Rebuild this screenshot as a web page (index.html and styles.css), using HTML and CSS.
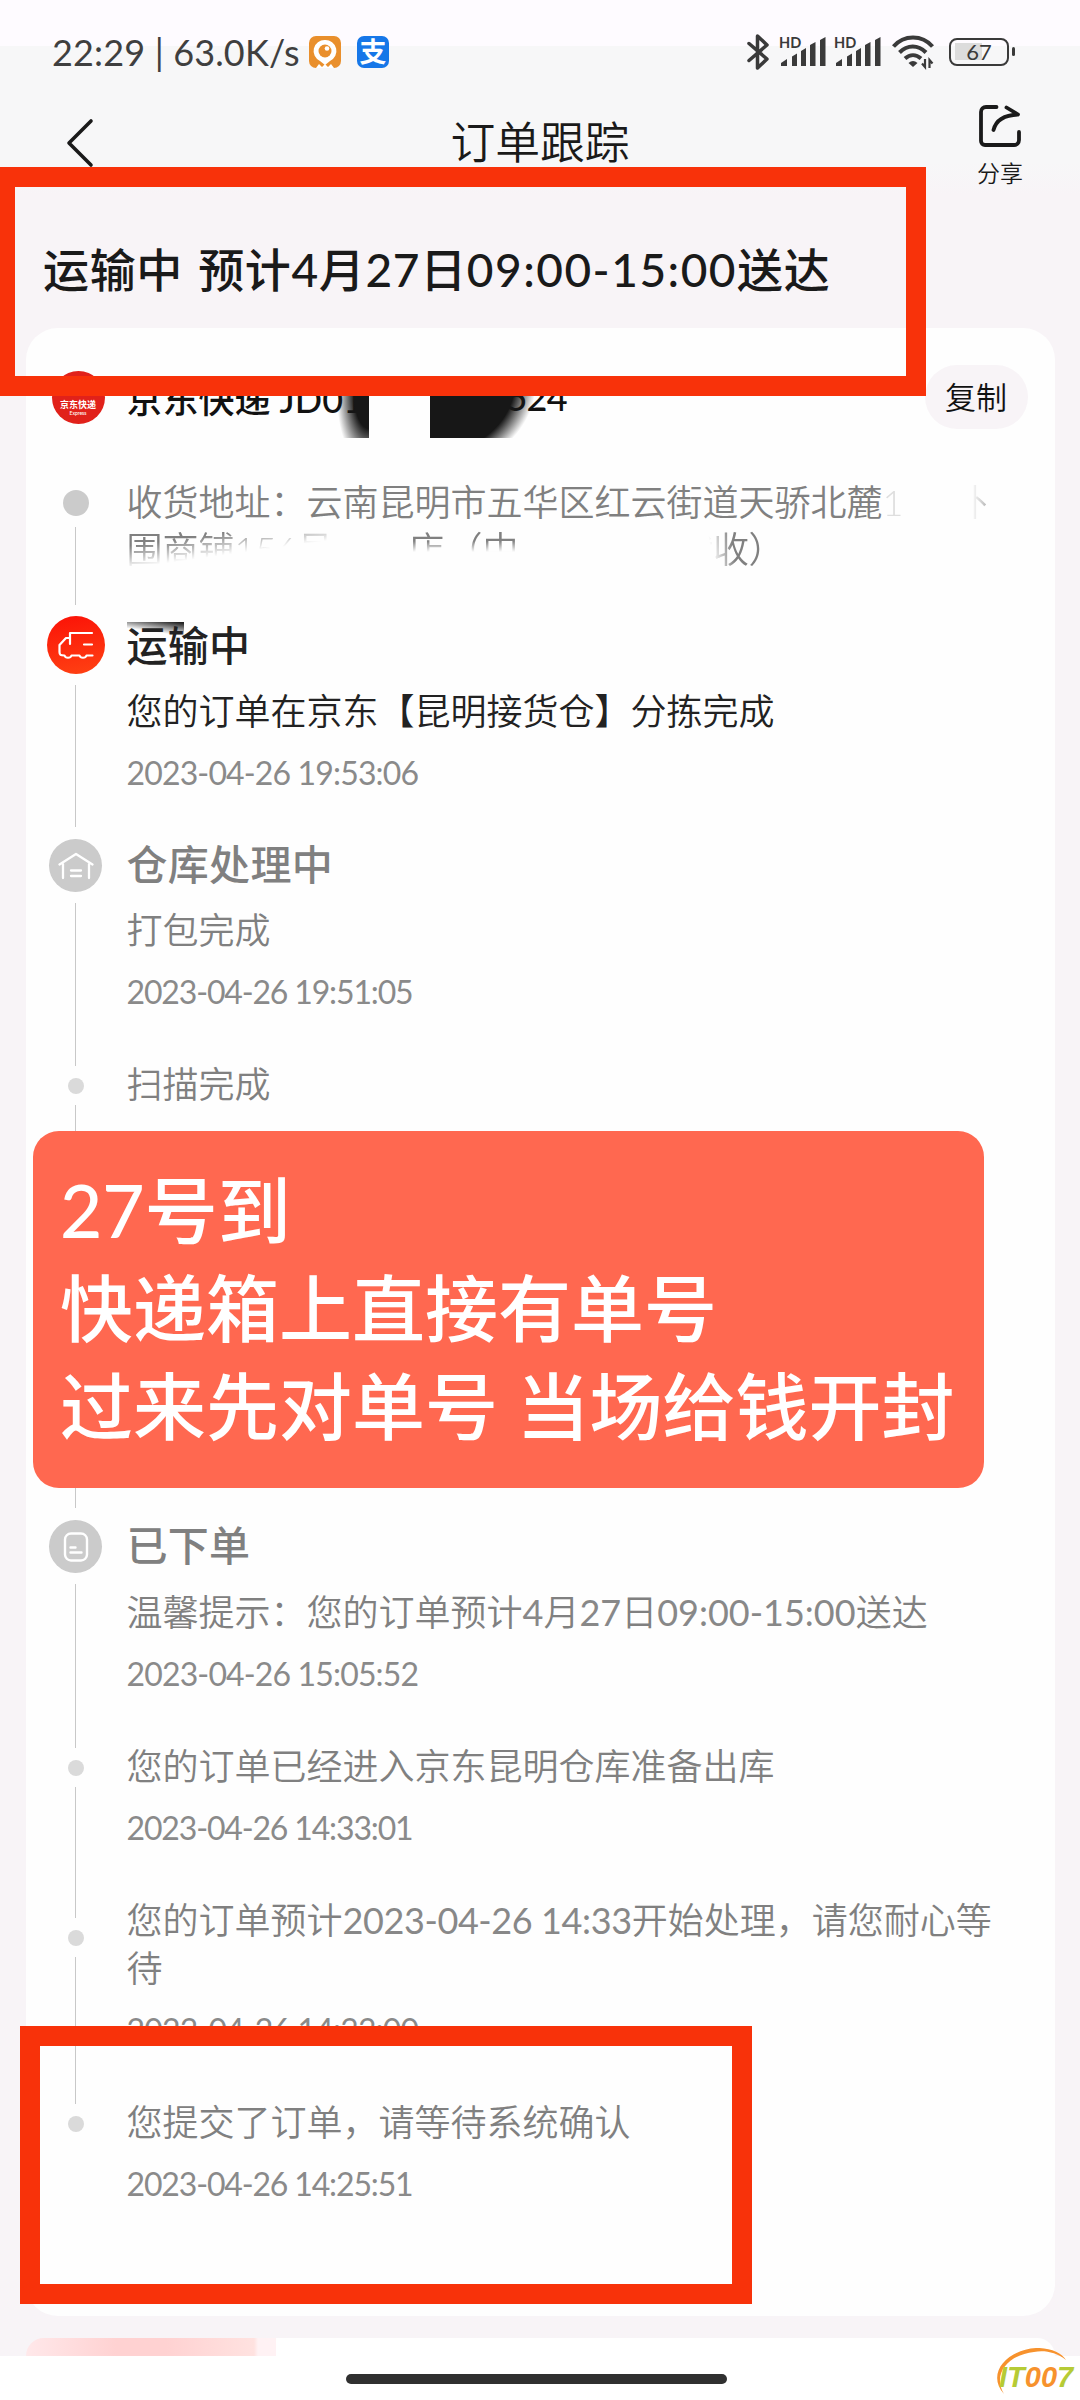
FILE: index.html
```html
<!DOCTYPE html>
<html lang="zh-CN">
<head>
<meta charset="utf-8">
<title>订单跟踪</title>
<link rel="stylesheet" href="styles.css">
</head>
<body>
<div class="screen">
  <header class="top">
    <div class="status">
      <span class="clock">22:29 | 63.0K/s</span>
      <svg class="app-icon" width="32" height="32" viewBox="0 0 32 32"><rect width="32" height="32" rx="7" fill="#e98f2c"/><path d="M7 32l3-4 3 3 3-3 3 3 3-3 3 4z" fill="#fff"/><path d="M16 4a11 11 0 0 1 5 21l-5 4-5-4a11 11 0 0 1 5-21z" fill="#fff"/><circle cx="16" cy="15" r="6.5" fill="#e98f2c"/><circle cx="18" cy="12.500" r="2.300" fill="#fff"/></svg>
      <span class="pay-icon">支</span>
      <div class="signals">
        <svg width="22" height="36" viewBox="0 0 22 36" fill="none" stroke="#3a3a3a" stroke-width="3.500" stroke-linejoin="round" stroke-linecap="round"><path d="M2 9.500L20 25 10.500 34V2L20 11 2 26.500"/></svg>
        <svg class="cell" width="47" height="32" viewBox="0 0 47 32"><text x="0" y="12" class="hd">HD</text><g fill="#3a3a3a"><path d="M2 30v-3l6-4v7zM13 30V20.500l5-3V30zM22 30V15l5-3V30zM31 30V9l5.500-3v24zM41 30V4l5.500-3v29z"/></g></svg>
        <svg class="cell2" width="47" height="32" viewBox="0 0 47 32"><text x="0" y="12" class="hd">HD</text><g fill="#3a3a3a"><path d="M2 30v-3l6-4v7zM13 30V20.500l5-3V30zM22 30V15l5-3V30zM31 30V9l5.500-3v24zM41 30V4l5.500-3v29z"/></g></svg>
        <svg class="wifi" width="42" height="34" viewBox="0 0 42 34" fill="none" stroke="#3a3a3a" stroke-width="4"><path d="M1.500 11.500C12-.500 30-.500 40.500 11.500M7.500 17.500c8-8 18.500-8 26.500 0M13 23.500c5-4.500 11-4.500 16 0"/><path d="M16.500 28q4.500-4 9 0L21 32z" fill="#3a3a3a" stroke="none"/><path d="M33 24v8l-3-3.500M37.500 33v-8l3 3.500" stroke-width="2.200"/></svg>
        <span class="battery">67</span>
      </div>
    </div>
    <nav class="nav">
      <svg class="back" width="28" height="50" viewBox="0 0 28 50" fill="none" stroke="#1a1a1a" stroke-width="3.600" stroke-linecap="round" stroke-linejoin="round"><path d="M25 3L3 25l22 22"/></svg>
      <h1>订单跟踪</h1>
      <div class="share">
        <svg width="44" height="44" viewBox="0 0 44 44" fill="none" stroke="#1a1a1a" stroke-width="3.800" stroke-linecap="round" stroke-linejoin="round"><path d="M18.500 3H8a5 5 0 0 0-5 5v29a4 4 0 0 0 4 4h29a5 5 0 0 0 5-5V28M28.500 3.500L40 10.500M40 10.500C27 11 18 16 15.500 26"/></svg>
        <span>分享</span>
      </div>
    </nav>
  </header>

  <h2 class="eta">运输中 预计4月27日<span>09:00-15:00</span>送达</h2>

  <main class="card">
    <div class="courier">
      <span class="logo"><b>京东快递</b><i>Express</i></span>
      <span class="number">京东快递 JD01</span>
      <span class="tail-number">524</span>
      <button class="copy">复制</button>
      <i class="ink ink-left"></i><i class="ink ink-right"></i>
    </div>

    <ol class="timeline">
      <li class="step address">
        <div class="rail"><span class="pin"></span><span class="line"></span></div>
        <div class="body">
          <p><span>收货地址：云南昆明市五华区红云街道天骄北麓</span><span class="faint">1</span><span class="half">外</span></p>
          <p class="wiped"><span class="w1">围商铺156号</span><span class="w2">店</span><span class="w3">（中</span><span class="w4">代收）</span></p>
        </div>
      </li>
      <li class="step current">
        <div class="rail"><span class="badge truck"><svg width="36" height="28" viewBox="0 0 36 28" fill="none" stroke="#fff" stroke-width="2.200" stroke-linecap="round" stroke-linejoin="round"><path d="M34 2H12v11M12 7H8L1.500 14v7c0 3 1 3.500 5 3.500 1 3 6 3 7 0h8c1 3 6 3 7 0h6M26 13.500h8"/></svg></span><span class="line"></span></div>
        <div class="body"><h3>运输中</h3><p>您的订单在京东【昆明接货仓】分拣完成</p><time>2023-04-26 19:53:06</time><i class="scribble"></i></div>
      </li>
      <li class="step">
        <div class="rail"><span class="badge"><svg width="36" height="28" viewBox="0 0 36 28" fill="none" stroke="#fff" stroke-width="2.300" stroke-linecap="round" stroke-linejoin="round"><path d="M1.500 12.500L18 2l16.500 10.500M5 12v14M31 12v14M13 18.500h10M13 24h10"/></svg></span><span class="line"></span></div>
        <div class="body before-dot"><h3>仓库处理中</h3><p>打包完成</p><time class="tight">2023-04-26 19:51:05</time></div>
      </li>
      <li class="step dot covered">
        <div class="rail"><span class="lead"></span><span class="pin"></span><span class="line"></span></div>
        <div class="body"><p>扫描完成</p></div>
      </li>
      <li class="step placed">
        <div class="rail"><span class="badge"><svg width="26" height="30" viewBox="0 0 26 30" fill="none" stroke="#fff" stroke-width="2.400" stroke-linecap="round"><rect x="2" y="1.500" width="22" height="27" rx="6"/><path d="M7.500 15.500h5M7.500 20.500h11"/></svg></span><span class="line"></span></div>
        <div class="body before-dot"><h3>已下单</h3><p>温馨提示：您的订单预计<span class="num">4</span>月<span class="num">27</span>日<span class="num">09:00-15:00</span>送达</p><time>2023-04-26 15:05:52</time></div>
      </li>
      <li class="step dot">
        <div class="rail"><span class="lead"></span><span class="pin"></span><span class="line"></span></div>
        <div class="body before-dot"><p>您的订单已经进入京东昆明仓库准备出库</p><time class="tight">2023-04-26 14:33:01</time></div>
      </li>
      <li class="step dot tall">
        <div class="rail"><span class="lead"></span><span class="pin"></span><span class="line"></span></div>
        <div class="body before-dot"><p>您的订单预计<span class="num when">2023-04-26 14:33</span>开始处理，请您耐心等<br>待</p><time>2023-04-26 14:33:00</time></div>
      </li>
      <li class="step dot">
        <div class="rail"><span class="lead"></span><span class="pin"></span></div>
        <div class="body"><p>您提交了订单，请等待系统确认</p><time class="tight">2023-04-26 14:25:51</time></div>
      </li>
    </ol>
  </main>

  <section class="next-card"></section>
  <footer class="home"><span></span></footer>

  <div class="frame frame-eta"></div>
  <div class="frame frame-submit"></div>
  <div class="callout">27号到<br>快递箱上直接有单号<br>过来先对单号 当场给钱开封</div>
  <div class="watermark">
    <svg width="80" height="50" viewBox="0 0 80 50"><path d="M10 46C-8 26 12 2 42 0 56-.500 68 5 72 12 62 4 50 2 40 4 14 7-2 26 10 46z" fill="#f7922d"/></svg>
    <span>IT<b>00</b>7</span>
  </div>
</div>
</body>
</html>
```
FILE: styles.css
```css
* { box-sizing: border-box; margin: 0; padding: 0; }
body { background: #fff; }
.screen {
  position: relative; width: 1080px; height: 2400px; overflow: hidden;
  display: flex; flex-direction: column; background: #f8f4f7;
  font-family: Lato, "Noto Sans CJK SC", sans-serif; color: #1a1a1a;
}
.top { height: 195px; background: linear-gradient(#fefbff 0 46px, #f7f7f8 46px 162px, #f8f4f7 195px); }
.status { display: flex; align-items: center; height: 72px; padding: 32px 65px 0 52px; }
.clock { width: 257px; font-size: 36px; letter-spacing: 0.15px; color: #3f3f3f; white-space: nowrap; line-height: 40px; }
.pay-icon {
  width: 32px; height: 32px; margin-left: 16px; border-radius: 7px; background: #1677e8; color: #fff;
  font: bold 27px/29px "Noto Sans CJK SC", sans-serif; text-align: center;
}
.signals { display: flex; align-items: center; margin-left: auto; }
.signals svg { overflow: visible; }
.cell { margin-left: 10px; }
.cell2 { margin-left: 8px; }
.hd { font: bold 14.500px Lato, sans-serif; fill: #3a3a3a; }
.wifi { margin-left: 11px; }
.battery {
  position: relative; width: 60px; height: 28px; margin: 0 6px 0 15px; border: 2.5px solid #3a3a3a; border-radius: 8px;
  font-size: 22px; line-height: 23px; text-align: center; color: #3a3a3a;
  background: linear-gradient(90deg, #dcdcdc 27px, transparent 27px) 4px 3px / 50px 17px no-repeat;
}
.battery::after { content: ""; position: absolute; right: -8px; top: 7px; width: 3px; height: 9px; border-radius: 2px; background: #3a3a3a; }
.nav { display: grid; grid-template-columns: 1fr auto 1fr; align-items: start; padding: 0 57px 0 66px; }
.back { margin-top: 46px; }
h1 { font-size: 44.800px; font-weight: 350; line-height: 60px; margin-top: 40px; padding-right: 9px; }
.share { justify-self: end; display: flex; flex-direction: column; align-items: center; padding-top: 32px; }
.share span { font-size: 23px; line-height: 30px; margin-top: 10px; font-weight: 350; }
.eta { height: 133px; padding: 45px 0 0 43px; font-size: 46px; line-height: 60px; font-weight: 500; white-space: nowrap; letter-spacing: 0.65px; word-spacing: 3px; }
.eta span { letter-spacing: 1.5px; }

.card { width: 1029px; height: 1988px; margin: 0 auto; padding-top: 37px; border-radius: 32px; background: #fefefe; }
.courier { position: relative; display: flex; align-items: center; height: 64px; padding: 0 27px 0 26px; font-size: 36px; font-weight: 500; color: #111; }
.logo {
  display: flex; flex-direction: column; align-items: center; justify-content: flex-end; width: 53px; height: 53px;
  padding-bottom: 7px; border-radius: 50%; background: #e1211a; color: #fff; line-height: 1;
}
.logo b { font-size: 9px; line-height: 11px; }
.logo i { font-size: 5px; font-style: normal; line-height: 7px; }
.number { margin-left: 22px; width: 380px; white-space: nowrap; }
.tail-number { letter-spacing: -0.8px; }
.copy { margin-left: auto; width: 103px; height: 64px; padding-bottom: 3px; border: 0; border-radius: 32px; background: #f8f4f7; font: 350 31px "Noto Sans CJK SC", sans-serif; color: #111; }
.ink { position: absolute; bottom: -9px; height: 56px; }
.ink-left { left: 312px; width: 31px; background: radial-gradient(ellipse 32px 70px at 31px 15px, #171717 45%, transparent); }
.ink-right { left: 404px; width: 104px; background: radial-gradient(ellipse 106px 90px at 0 0, #171717 80%, transparent); }

.timeline { list-style: none; margin-top: 49px; padding-left: 21px; }
.step { display: grid; grid-template-columns: 58px 1fr; column-gap: 22px; }
.rail { display: flex; flex-direction: column; align-items: center; padding-top: 4px; }
.badge { display: grid; place-items: center; flex: none; width: 53px; height: 53px; border-radius: 50%; background: #cbcbcb; }
.truck { width: 58px; height: 58px; background: linear-gradient(170deg, #fb1207, #ff4213); }
.line { flex: 1; width: 1.5px; margin: 11px 0 8px; background: #c8c8c8; }
.lead { width: 1.5px; height: 6px; margin-bottom: 12px; background: #c8c8c8; }
.pin { flex: none; width: 16px; height: 16px; border-radius: 50%; background: #dadada; }
.dot .rail, .current .rail { padding-top: 0; }
.step:has(.before-dot) .line { margin-bottom: 0; }
.covered .line { margin-bottom: 8px; }
.tall .lead { height: 22px; }
.body { position: relative; padding-bottom: 42px; color: #808080; white-space: nowrap; }
.body.before-dot { padding-bottom: 48px; }
.body p { font-size: 36px; line-height: 48px; font-weight: 350; }
.body h3 { font-size: 41px; line-height: 60px; font-weight: 500; margin-bottom: 11px; letter-spacing: 0.3px; }
.body time { display: block; margin-top: 18px; font-size: 32px; line-height: 40px; font-weight: 400; color: #8a8a8a; letter-spacing: -0.85px; }
.body time.tight { letter-spacing: -1.15px; }
.num { font-weight: 400; color: #888; }
.when { letter-spacing: -0.4px; }
.current h3, .current p { color: #222; }
.placed h3 { margin-bottom: 12px; }
.covered { height: 456px; }
.address { height: 138px; }
.address .rail { padding-top: 12px; }
.address .pin { width: 26px; height: 26px; background: #cbcbcb; }
.address .line { margin-bottom: 11px; }
.address p { display: flex; height: 47px; }
.faint { width: 20px; opacity: 0.25; }
.half { margin-left: 49px; -webkit-mask: linear-gradient(90deg, transparent 55%, rgba(0, 0, 0, 0.6)); mask: linear-gradient(90deg, transparent 55%, rgba(0, 0, 0, 0.6)); }
.wiped span { -webkit-mask: linear-gradient(#000 16px, transparent 27px); mask: linear-gradient(#000 16px, transparent 27px); }
.wiped .w1 { width: 204px; -webkit-mask: linear-gradient(172deg, #000 28%, transparent 58%); mask: linear-gradient(172deg, #000 28%, transparent 58%); }
.wiped .w2 { margin-left: 78px; }
.wiped .w3 { margin-left: 2px; }
.wiped .w4 { margin-left: 159px; letter-spacing: -0.5px; -webkit-mask: linear-gradient(80deg, transparent 32%, #000 52%); mask: linear-gradient(80deg, transparent 32%, #000 52%); }
.scribble { position: absolute; left: 0; top: 6px; width: 57px; height: 14px; background: linear-gradient(8deg, transparent 35%, #222 95%); }

.next-card { flex: none; width: 1029px; height: 18px; margin: 22px auto 0; border-radius: 32px 32px 0 0; background: linear-gradient(90deg, #ffe8ea, #ffd2d2 90px 140px, #ffe2e0 228px, #fff2f4 232px 250px, #fff 250px); }
.home { height: 44px; padding: 18px 0 0 346px; background: #fff; }
.home span { display: block; width: 381px; height: 10px; border-radius: 5px; background: #303030; }

/* Annotations drawn over the page */
.frame { position: absolute; border: 20px solid #f8320a; }
.frame-eta { left: -5px; top: 167px; width: 931px; height: 229px; }
.frame-submit { left: 20px; top: 2026px; width: 732px; height: 278px; }
.callout {
  position: absolute; left: 33px; top: 1131px; width: 951px; height: 357px; padding: 30px 0 0 27px; border-radius: 26px;
  background: #ff6850; color: #fff; font-size: 73px; line-height: 98px; font-weight: 500; white-space: nowrap;
}
.watermark { position: absolute; left: 994px; top: 2348px; width: 80px; height: 50px; font: italic bold 29px/32px "Liberation Sans", sans-serif; color: #b6cb35; }
.watermark span { position: absolute; left: 5px; top: 13px; }
.watermark b { color: #f7922d; }
```
